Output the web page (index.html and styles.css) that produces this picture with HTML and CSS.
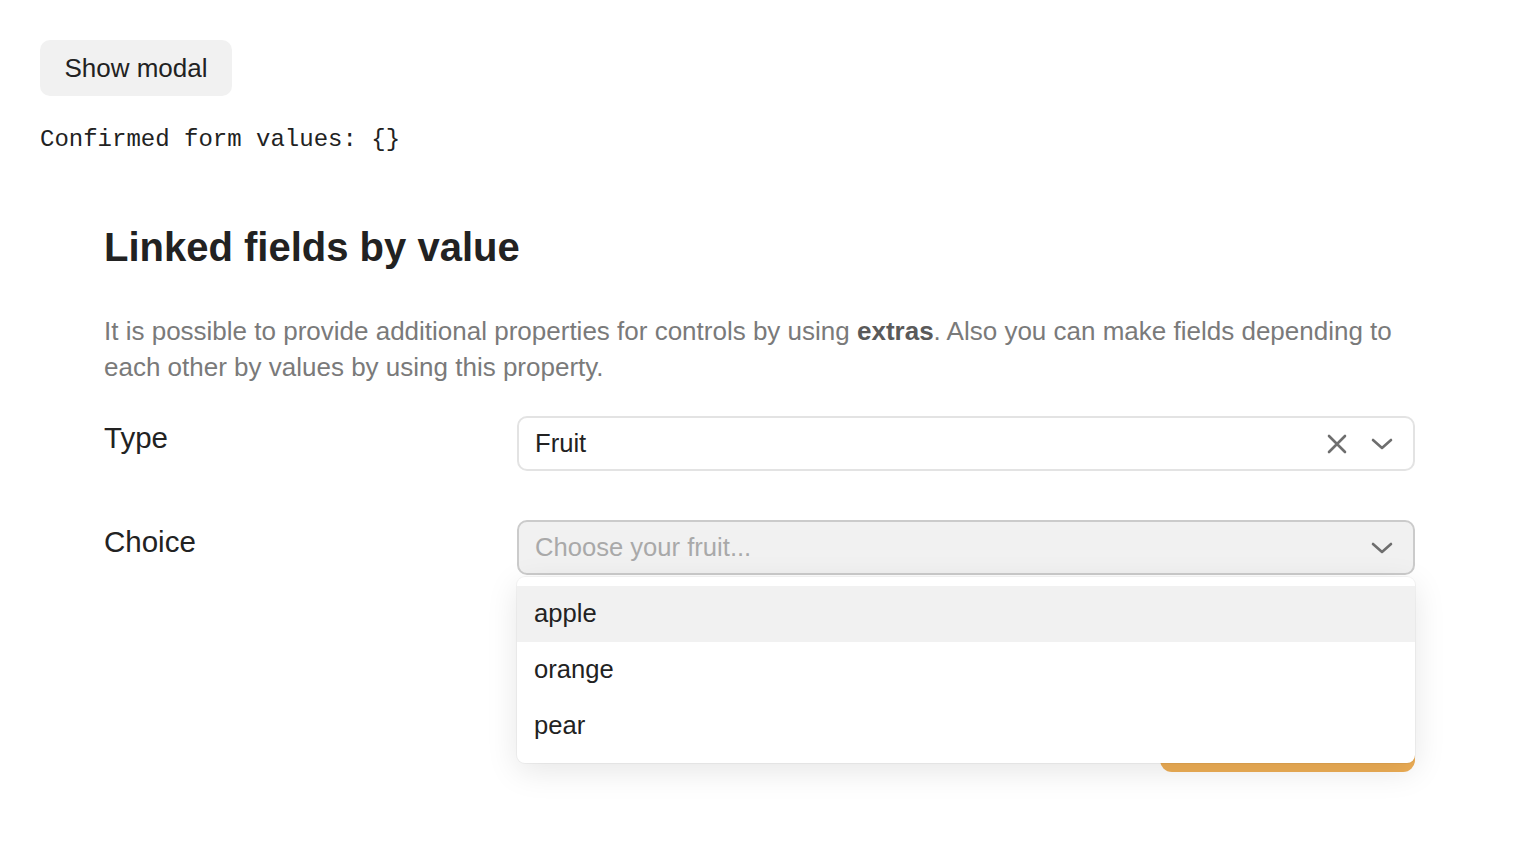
FILE: index.html
```html
<!DOCTYPE html>
<html>
<head>
<meta charset="utf-8">
<link rel="stylesheet" href="styles.css">
</head>
<body>
<div class="page">
  <button class="show-btn">Show modal</button>
  <pre class="values">Confirmed form values: {}</pre>
  <section class="demo">
    <h2 class="title">Linked fields by value</h2>
    <p class="desc">It is possible to provide additional properties for controls by using <b>extras</b>. Also you can make fields depending to each other by values by using this property.</p>
    <form class="form">
      <div class="row">
        <label class="label">Type</label>
        <div class="select">
          <span class="value">Fruit</span>
          <span class="icons">
            <svg class="ico" width="22" height="22" viewBox="0 0 22 22"><path d="M3 3 L19 19 M19 3 L3 19" stroke="#6e6e6e" stroke-width="2.6" fill="none" stroke-linecap="round"/></svg>
            <svg class="ico" width="24" height="24" viewBox="0 0 24 24"><path d="M3 8 L12 16 L21 8" stroke="#6e6e6e" stroke-width="2.6" fill="none" stroke-linecap="round" stroke-linejoin="round"/></svg>
          </span>
        </div>
      </div>
      <div class="row">
        <label class="label">Choice</label>
        <div class="field">
          <div class="select open">
            <span class="placeholder">Choose your fruit...</span>
            <span class="icons">
              <svg class="ico" width="24" height="24" viewBox="0 0 24 24"><path d="M3 8 L12 16 L21 8" stroke="#6e6e6e" stroke-width="2.6" fill="none" stroke-linecap="round" stroke-linejoin="round"/></svg>
            </span>
          </div>
          <ul class="menu">
            <li class="item active">apple</li>
            <li class="item">orange</li>
            <li class="item">pear</li>
          </ul>
        </div>
      </div>
      <div class="footer">
        <button type="button" class="submit">Submit</button>
      </div>
    </form>
  </section>
</div>
</body>
</html>
```

FILE: styles.css
```css
* { box-sizing: border-box; }
html, body { margin: 0; padding: 0; background: #fff; }
body {
  font-family: "Liberation Sans", Arial, sans-serif;
  color: #222;
}
.page {
  padding: 40px;
}
.show-btn {
  display: block;
  height: 56px;
  width: 192px;
  border: none;
  border-radius: 10px;
  background: #f1f1f1;
  font-family: "Liberation Sans", Arial, sans-serif;
  font-size: 26px;
  line-height: 54px;
  color: #222;
  padding: 0;
}
.values {
  margin: 24px 0 0 0;
  font-family: "Liberation Mono", "Courier New", monospace;
  font-size: 24px;
  line-height: 40px;
  color: #222;
}
.demo {
  margin: 63px 0 0 64px;
  width: 1311px;
}
.title {
  margin: 0;
  font-size: 40px;
  line-height: 48px;
  font-weight: bold;
  color: #222;
}
.desc {
  margin: 42px 0 0 0;
  font-size: 26px;
  line-height: 36px;
  color: #7a7a7a;
}
.desc b { color: #5a5a5a; }
.form {
  margin-top: 31px;
  display: flex;
  flex-direction: column;
  gap: 49px;
}
.row {
  display: grid;
  grid-template-columns: 413px 1fr;
  align-items: start;
}
.label {
  font-size: 29.5px;
  line-height: 43px;
  color: #222;
}
.field { position: relative; }
.select {
  height: 55px;
  border: 2px solid #e3e3e3;
  border-radius: 10px;
  background: #fff;
  display: flex;
  align-items: center;
  justify-content: space-between;
  padding: 0 19px 0 16px;
  font-size: 25.6px;
}
.select.open {
  background: #f1f1f1;
  border-color: #cbcbcb;
}
.value { color: #222; }
.placeholder { color: #a9a9a9; }
.icons {
  display: flex;
  align-items: center;
  gap: 22px;
}
.ico { display: block; }
.menu {
  position: absolute;
  top: 57px;
  left: 0;
  right: 0;
  margin: 0;
  padding: 9px 0;
  list-style: none;
  background: #fff;
  border-radius: 8px;
  box-shadow: 0 0 0 1px rgba(0,0,0,0.04), 0 8px 32px rgba(0,0,0,0.1);
  z-index: 5;
}
.item {
  height: 56px;
  line-height: 54px;
  padding-left: 17px;
  font-size: 25.6px;
  color: #222;
}
.item.active { background: #f1f1f1; }
.footer {
  display: flex;
  justify-content: flex-end;
  margin-top: 92px;
}
.submit {
  width: 255px;
  height: 56px;
  border: none;
  border-radius: 12px;
  background: #eeae55;
  color: #fff;
  font-family: "Liberation Sans", Arial, sans-serif;
  font-size: 25.6px;
}
```
